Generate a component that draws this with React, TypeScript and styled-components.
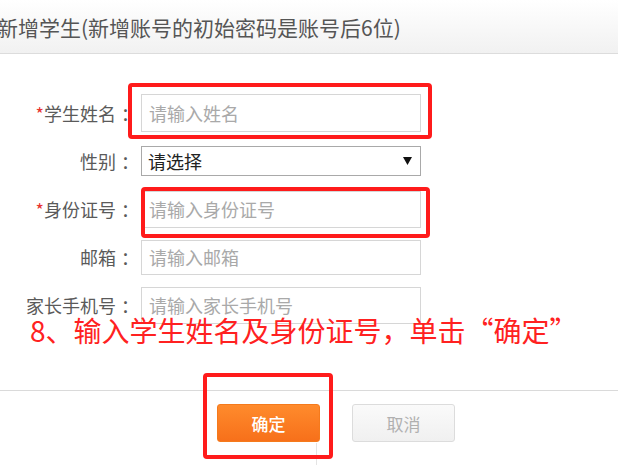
import styled, { createGlobalStyle } from "styled-components";

const GlobalStyle = createGlobalStyle`
  html, body {
    margin: 0;
    padding: 0;
    background: #fff;
  }
  body {
    font-family: "Noto Sans CJK SC", "Noto Sans", sans-serif;
    overflow: hidden;
  }
`;

const Dialog = styled.div`
  position: relative;
  width: 618px;
  height: 465px;
  overflow: hidden;
  background: #fff;
`;

const Header = styled.div`
  height: 53px;
  display: flex;
  align-items: center;
  background: linear-gradient(#ffffff, #f1f1f1);
  border-bottom: 1px solid #dcdcdc;
`;

const Title = styled.h3`
  margin: 0 0 0 -3px;
  font-size: 21px;
  font-weight: 400;
  color: #555;
  white-space: nowrap;
`;

const Form = styled.div`
  padding-top: 35px;
  display: flex;
  flex-direction: column;
`;

const Row = styled.div`
  height: 48px;
  display: flex;
  align-items: center;
`;

const Label = styled.label`
  width: 139px;
  margin-right: 2px;
  display: flex;
  justify-content: flex-end;
  font-size: 18px;
  color: #5a5a5a;
  white-space: nowrap;
`;

const Star = styled.span`
  color: #e8322f;
`;

const Colon = styled.span`
  padding-left: 5px;
`;

const TextInput = styled.input<{ $h?: number }>`
  box-sizing: border-box;
  width: 280px;
  height: ${(p) => p.$h ?? 37}px;
  padding: 0 7px;
  border: 1px solid #d6d6d6;
  font-family: inherit;
  font-size: 18px;
  color: #333;
  outline: none;
  &::placeholder {
    color: #a9a9a9;
  }
`;

const Select = styled.div`
  box-sizing: border-box;
  width: 280px;
  height: 30px;
  padding: 0 8px 0 6px;
  border: 1px solid #a9a9a9;
  display: flex;
  align-items: center;
  justify-content: space-between;
  font-size: 18px;
  color: #222;
`;

const Footer = styled.div`
  margin-top: 61px;
  border-top: 1px solid #dadada;
  padding: 13px 0 0 217px;
  display: flex;
  gap: 32px;
`;

const Button = styled.button<{ $primary?: boolean }>`
  position: relative;
  box-sizing: border-box;
  width: 103px;
  height: 38px;
  border-radius: 3px;
  font-family: inherit;
  font-size: 17px;
  cursor: pointer;
  border: 1px solid ${(p) => (p.$primary ? "#f57a1c" : "#dcdcdc")};
  background: ${(p) =>
    p.$primary
      ? "linear-gradient(#ff8b2c, #f7701a)"
      : "linear-gradient(#fafafa, #f0f0f0)"};
  color: ${(p) => (p.$primary ? "#fff" : "#b0b0b0")};
  font-weight: ${(p) => (p.$primary ? 500 : 400)};

  ${(p) =>
    p.$primary &&
    `
    &::after {
      content: "";
      position: absolute;
      left: 98px;
      top: 38px;
      width: 1px;
      height: 30px;
      background: #e4e4e4;
    }
  `}
`;

const Highlight = styled.div<{ $x: number; $y: number; $w: number; $h: number }>`
  position: absolute;
  left: ${(p) => p.$x}px;
  top: ${(p) => p.$y}px;
  width: ${(p) => p.$w}px;
  height: ${(p) => p.$h}px;
  box-sizing: border-box;
  border: 4px solid #ff1b1b;
  border-radius: 4px;
  pointer-events: none;
`;

const Note = styled.div`
  position: absolute;
  left: 30px;
  top: 310px;
  font-size: 28px;
  color: #ff2121;
  white-space: nowrap;
  line-height: 40px;
`;

const Arrow = () => (
  <svg width="9" height="8" viewBox="0 0 9 8">
    <path d="M0 0 L9 0 L4.5 8 Z" fill="#111" />
  </svg>
);

export default function App() {
  return (
    <>
      <GlobalStyle />
      <Dialog>
        <Header>
          <Title>新增学生(新增账号的初始密码是账号后6位)</Title>
        </Header>
        <Form>
          <Row>
            <Label>
              <Star>*</Star>学生姓名<Colon>：</Colon>
            </Label>
            <TextInput $h={38} placeholder="请输入姓名" />
          </Row>
          <Row>
            <Label>
              性别<Colon>：</Colon>
            </Label>
            <Select>
              <span>请选择</span>
              <Arrow />
            </Select>
          </Row>
          <Row>
            <Label>
              <Star>*</Star>身份证号<Colon>：</Colon>
            </Label>
            <TextInput placeholder="请输入身份证号" />
          </Row>
          <Row>
            <Label>
              邮箱<Colon>：</Colon>
            </Label>
            <TextInput $h={35} placeholder="请输入邮箱" />
          </Row>
          <Row>
            <Label>
              家长手机号<Colon>：</Colon>
            </Label>
            <TextInput placeholder="请输入家长手机号" />
          </Row>
        </Form>
        <Footer>
          <Button $primary>确定</Button>
          <Button>取消</Button>
        </Footer>

        <Note>8、输入学生姓名及身份证号，单击“确定”</Note>
        <Highlight $x={128} $y={83} $w={304} $h={56} />
        <Highlight $x={141} $y={187} $w={289} $h={51} />
        <Highlight $x={203} $y={373} $w={130} $h={86} />
      </Dialog>
    </>
  );
}
